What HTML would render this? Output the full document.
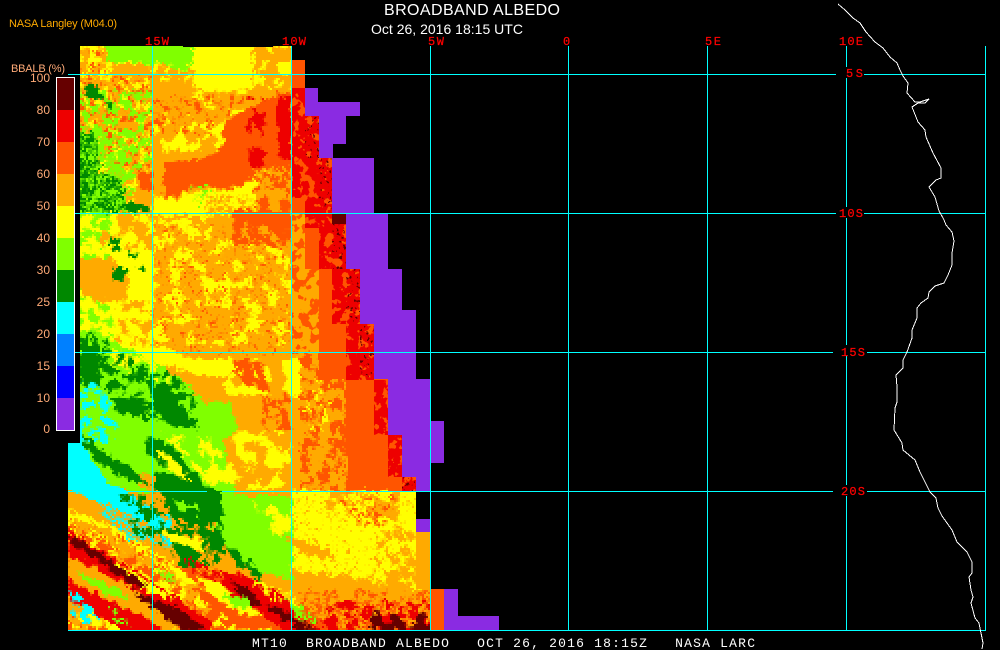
<!DOCTYPE html>
<html><head><meta charset="utf-8"><title>BROADBAND ALBEDO</title>
<style>
html,body{margin:0;padding:0;background:#000;width:1000px;height:650px;overflow:hidden}
svg{display:block}
text{white-space:pre}
.s{font-family:"Liberation Sans",sans-serif}
.m{font-family:"Liberation Mono",monospace}
.r{fill:#f00;stroke:#f00;stroke-width:.25;font-size:12px}
.t{fill:#ffaa77;font-size:12px;text-anchor:end}
</style></head><body>
<svg width="1000" height="650" viewBox="0 0 1000 650" xmlns="http://www.w3.org/2000/svg">
<defs>
<clipPath id="img"><path d="M80 46H292V60H305V116H319V158H332V214H346V269H360V324H374V379H388V435H402V477H416V532H430V589H444V630H68V443H80Z"/></clipPath>
<filter id="rough" x="0" y="0" width="500" height="650" filterUnits="userSpaceOnUse" color-interpolation-filters="sRGB">
<feTurbulence type="fractalNoise" baseFrequency="0.16" numOctaves="4" seed="5" result="n"/>
<feDisplacementMap in="SourceGraphic" in2="n" scale="12" xChannelSelector="R" yChannelSelector="G" result="d"/>
<feFlood flood-color="#000" x="0" y="0" width="1" height="1"/>
<feComposite width="2" height="2" result="dot"/>
<feTile result="grid"/>
<feComposite in="d" in2="grid" operator="in" result="p0"/>
<feOffset in="p0" dx="1" dy="0" result="p1"/>
<feMerge result="p2"><feMergeNode in="p0"/><feMergeNode in="p1"/></feMerge>
<feOffset in="p2" dx="0" dy="1" result="p3"/>
<feMerge><feMergeNode in="p2"/><feMergeNode in="p3"/></feMerge>
</filter>
<filter id="m1" x="0" y="0" width="500" height="650" filterUnits="userSpaceOnUse" color-interpolation-filters="sRGB">
<feTurbulence type="fractalNoise" baseFrequency="0.06" numOctaves="3" seed="11"/>
<feColorMatrix values="0 0 0 0 0 0 0 0 0 0 0 0 0 0 0 30 0 0 0 -15"/>
<feComposite in="SourceGraphic" operator="in"/>
</filter>
<filter id="m2" x="0" y="0" width="500" height="650" filterUnits="userSpaceOnUse" color-interpolation-filters="sRGB">
<feTurbulence type="fractalNoise" baseFrequency="0.11" numOctaves="2" seed="23"/>
<feColorMatrix values="0 0 0 0 0 0 0 0 0 0 0 0 0 0 0 0 30 0 0 -15.5"/>
<feComposite in="SourceGraphic" operator="in"/>
</filter>
<filter id="m3" x="0" y="0" width="500" height="650" filterUnits="userSpaceOnUse" color-interpolation-filters="sRGB">
<feTurbulence type="fractalNoise" baseFrequency="0.3" numOctaves="2" seed="3"/>
<feColorMatrix values="0 0 0 0 0 0 0 0 0 0 0 0 0 0 0 30 0 0 0 -15"/>
<feComposite in="SourceGraphic" operator="in"/>
</filter>
<filter id="m4" x="0" y="0" width="500" height="650" filterUnits="userSpaceOnUse" color-interpolation-filters="sRGB">
<feTurbulence type="fractalNoise" baseFrequency="0.18" numOctaves="2" seed="41"/>
<feColorMatrix values="0 0 0 0 0 0 0 0 0 0 0 0 0 0 0 30 0 0 0 -17.5"/>
<feComposite in="SourceGraphic" operator="in"/>
</filter>
<filter id="m5" x="0" y="0" width="500" height="650" filterUnits="userSpaceOnUse" color-interpolation-filters="sRGB">
<feTurbulence type="fractalNoise" baseFrequency="0.1" numOctaves="3" seed="17"/>
<feColorMatrix values="0 0 0 0 0 0 0 0 0 0 0 0 0 0 0 30 0 0 0 -15.6"/>
<feComposite in="SourceGraphic" operator="in"/>
</filter>
<filter id="m6" x="0" y="0" width="500" height="650" filterUnits="userSpaceOnUse" color-interpolation-filters="sRGB">
<feTurbulence type="fractalNoise" baseFrequency="0.12" numOctaves="3" seed="8"/>
<feColorMatrix values="0 0 0 0 0 0 0 0 0 0 0 0 0 0 0 0 30 0 0 -12"/>
<feComposite in="SourceGraphic" operator="in"/>
</filter>
<filter id="m7" x="0" y="0" width="500" height="650" filterUnits="userSpaceOnUse" color-interpolation-filters="sRGB">
<feTurbulence type="fractalNoise" baseFrequency="0.3" numOctaves="2" seed="29"/>
<feColorMatrix values="0 0 0 0 0 0 0 0 0 0 0 0 0 0 0 30 0 0 0 -19.5"/>
<feComposite in="SourceGraphic" operator="in"/>
</filter>
<filter id="m8" x="0" y="0" width="500" height="650" filterUnits="userSpaceOnUse" color-interpolation-filters="sRGB">
<feTurbulence type="fractalNoise" baseFrequency="0.065" numOctaves="3" seed="31"/>
<feColorMatrix values="0 0 0 0 0 0 0 0 0 0 0 0 0 0 0 30 0 0 0 -16"/>
<feComposite in="SourceGraphic" operator="in"/>
</filter>
</defs>
<rect width="1000" height="650" fill="#000"/>

<g clip-path="url(#img)"><g filter="url(#rough)">
<rect x="50" y="30" width="420" height="620" fill="#ffaa00"/>

<!-- top band -->
<path fill="#ffff00" d="M60 30H112V78H60Z"/>
<path fill="#ff5500" d="M60 45H112V78H60Z" filter="url(#m4)"/>
<path fill="#ffaa00" d="M60 40H112V78H60Z" filter="url(#m5)"/>
<path fill="#80ff00" d="M108 30H194V70L180 72L162 62L147 66L112 62L106 66Z"/>
<path fill="#ffff00" d="M193 30H252V90H193Z"/>
<path fill="#ffff00" d="M105 62H195V80H105Z" filter="url(#m5)"/>
<path fill="#ffaa00" d="M113 64H147V76H113Z"/>
<path fill="#ffff00" d="M253 40H296V92H253Z" filter="url(#m8)"/>

<!-- left column -->
<path fill="#ffaa00" d="M60 76H152V215H60Z"/>
<path fill="#ffff00" d="M60 76H152V215H60Z" filter="url(#m5)"/>
<path fill="#ff5500" d="M60 76H152V170H60Z" filter="url(#m4)"/>
<path fill="#80ff00" d="M60 90H150V170L135 200L60 210Z" filter="url(#m2)"/>
<path fill="#ffaa00" d="M135 170H155V204H135Z"/>
<path fill="#ff5500" d="M138 172H152V190H138Z"/>
<path fill="#008800" d="M84 84L98 86L100 98L86 96Z"/>
<path fill="#008800" d="M70 128L96 134L100 170L122 180L124 200L146 204L146 218H70Z"/>
<path fill="#80ff00" d="M70 130H125V218H70Z" filter="url(#m3)"/>
<path fill="#008800" d="M104 100L112 104L108 110Z"/>

<!-- upper middle -->
<path fill="#ffaa00" d="M152 88H290V215H152Z"/>
<path fill="#ffff00" d="M193 82H250V88L238 90L205 92Z"/>
<path fill="#ffff00" d="M190 90H250V125H190Z" filter="url(#m8)"/>
<path fill="#ff5500" d="M153 95H255V135H153Z" filter="url(#m4)"/>
<path fill="#ffff00" d="M153 112H225V150H153Z" filter="url(#m8)"/>
<path fill="#ff5500" d="M224 122L280 92H292V170L262 168L247 182L225 188L195 186L172 197L162 195L165 160L195 160L222 148Z"/>
<path fill="#ee0000" d="M277 96H291V158H277Z" />
<path fill="#ee0000" d="M248 96H264V170H248Z" filter="url(#m1)"/>
<path fill="#ffff00" d="M153 196L175 198L195 190L225 190L250 182L256 178L258 215H153Z"/>
<path fill="#80ff00" d="M192 185H212V205H192Z" filter="url(#m4)"/>
<path fill="#ffaa00" d="M205 195H260V215H205Z" filter="url(#m3)"/>
<path fill="#ffaa00" d="M255 172H292V215H255Z"/>
<path fill="#ff5500" d="M255 172H292V215H255Z" filter="url(#m5)"/>
<path fill="#ffff00" d="M250 170H275V190H250Z" filter="url(#m7)"/>

<!-- mid-left -->
<path fill="#ffff00" d="M60 212H153V350H60Z"/>
<path fill="#80ff00" d="M60 212H112V330H60Z" filter="url(#m2)"/>
<path fill="#ffaa00" d="M100 212H153V250H100Z" filter="url(#m1)"/>
<path fill="#ffaa00" d="M78 258L112 258L130 278L125 300L95 302L78 288Z"/>
<path fill="#ffaa00" d="M115 300H153V350H115Z" filter="url(#m5)"/>
<path fill="#008800" d="M110 238L118 238L120 252L112 252Z"/>
<path fill="#008800" d="M112 266L124 266L124 280L112 280Z"/>
<path fill="#008800" d="M128 250L138 252L136 258L130 258Z"/>
<path fill="#008800" d="M136 265L145 268L142 272Z"/>

<!-- middle orange with yellow mottling -->
<path fill="#ffaa00" d="M153 215H345V355H153Z"/>
<path fill="#ffff00" d="M153 240H292V345H153Z" filter="url(#m8)"/>
<path fill="#ffff00" d="M153 215H210V240H153Z" filter="url(#m2)"/>
<path fill="#ff5500" d="M153 225H300V355H153Z" filter="url(#m7)"/>
<path fill="#ff5500" d="M233 210H292V245H233Z"/>
<path fill="#ffaa00" d="M233 225H292V245H233Z" filter="url(#m5)"/>

<!-- below 15S -->
<path fill="#ffff00" d="M60 345L160 345L190 358L240 358L240 376L200 376L180 368L60 350Z"/>
<path fill="#ffaa00" d="M200 376H300V490H200Z"/>
<path fill="#ffff00" d="M225 358H300V395H225Z" filter="url(#m1)"/>
<path fill="#ff5500" d="M232 358L262 362L270 390L245 385L232 372Z" filter="url(#m6)"/>
<path fill="#ff5500" d="M262 395H290V430H262Z" filter="url(#m5)"/>
<path fill="#ffff00" d="M282 358H302L306 398L284 392Z"/>
<path fill="#ffaa00" d="M300 352H345V490H300Z"/>
<path fill="#ff5500" d="M300 352H345V490H300Z" filter="url(#m5)"/>
<path fill="#ffff00" d="M305 380H330V430H305Z" filter="url(#m4)"/>
<path fill="#ffff00" d="M230 430H290V490H230Z" filter="url(#m1)"/>
<path fill="#ff5500" d="M345 352H430V495H345Z"/>

<!-- green diagonal -->
<path fill="#80ff00" d="M60 330L96 330L150 360L185 382L205 405L228 400L238 428L222 440L238 500L292 500L292 580L240 565L180 480L120 470L60 470Z"/>
<path fill="#ffff00" d="M105 345L150 360L172 385L150 380L115 368Z" filter="url(#m1)"/>
<path fill="#ffff00" d="M160 432L228 440L244 485L215 490L195 470Z" filter="url(#m1)"/>
<path fill="#008800" d="M60 332H98L125 355L150 368L168 368L196 398L197 430L165 420L135 420L110 395L85 385L60 380Z" filter="url(#m2)"/>
<path fill="#008800" d="M80 345H98L100 385H80Z"/>
<path fill="#008800" d="M150 385L170 390L195 425L175 428L155 412Z"/>
<path fill="#008800" d="M108 395L140 398L150 420L118 412Z"/>
<path fill="#80ff00" d="M193 402L225 402L226 422L198 424Z"/>
<path fill="#00ffff" d="M60 378L100 385L118 425L108 445L100 440L60 440Z" filter="url(#m2)"/>

<!-- cyan block -->
<path fill="#00ffff" d="M55 430H82L90 460L125 492L165 520L155 528L120 510L85 495L70 490H55Z"/>
<path fill="#80ff00" d="M92 455L120 470L150 492L130 492L105 480Z"/>
<path fill="#008800" d="M80 433L100 450L135 470L150 487L125 478L95 460Z"/>
<path fill="#008800" d="M148 435L170 445L208 488L222 490L222 524L190 526L180 515L168 515L168 500L153 490L155 470L175 475L145 450Z"/>
<path fill="#80ff00" d="M172 500L195 505L198 518L180 510Z"/>
<path fill="#ffff00" d="M153 447L175 458L192 482L170 472Z"/>

<!-- lower left mottled -->
<path fill="#ffff00" d="M55 505L120 530L200 580L250 600L320 640H55Z"/>
<path fill="#ff5500" d="M55 510L140 545L200 580H55Z" filter="url(#m3)"/>
<path fill="#00ffff" d="M100 495L170 515L172 545L130 540L100 515Z" filter="url(#m3)"/>
<path fill="#008800" d="M120 495H170L220 525L222 560L190 570L160 545L135 535Z" filter="url(#m2)"/>
<path fill="#008800" d="M172 540L195 545L198 565L180 565Z"/>
<path fill="#008800" d="M208 530L222 535L226 555L212 550Z"/>
<path fill="#ffff00" d="M160 530L205 540L200 550L170 540Z"/>

<!-- lime centre -->
<path fill="#80ff00" d="M222 495H290V575L255 565L228 545Z"/>
<path fill="#008800" d="M226 545L240 552L246 570L232 560Z"/>
<path fill="#008800" d="M245 560L260 570L262 582L250 575Z"/>
<path fill="#ffff00" d="M250 500L290 510L290 545L270 530Z" filter="url(#m1)"/>

<!-- bottom streak band -->
<path fill="#ffaa00" d="M55 510L110 530L150 560L200 570L245 590L300 585L300 640H55Z" filter="url(#m1)"/>
<path fill="#ff5500" d="M55 520L130 555L210 600L280 640H55Z" filter="url(#m2)"/>
<path fill="#ee0000" d="M68 530L100 550L150 580L210 620L215 635L190 635L140 600L90 565L68 555Z"/>
<path fill="#ffaa00" d="M68 555L100 570L160 605L190 630H130L80 590L68 590Z"/>
<path fill="#80ff00" d="M75 570L120 590L128 600L100 592Z"/>
<path fill="#ffff00" d="M115 562L150 582L175 600L150 592L120 575Z"/>
<path fill="#80ff00" d="M150 565L170 572L180 585L162 580Z" filter="url(#m3)"/>
<path fill="#ee0000" d="M68 580L150 620L165 635H130L90 610L68 600Z"/>
<path fill="#00ffff" d="M68 590L90 605L105 625L85 625L68 610Z" filter="url(#m2)"/>
<path fill="#80ff00" d="M105 605L125 605L128 625L112 620Z" filter="url(#m2)"/>
<path fill="#660000" d="M68 535L76 536L100 553L115 568L98 562L74 545Z"/>
<path fill="#660000" d="M100 555L122 568L146 584L136 588L108 570Z"/>
<path fill="#660000" d="M133 593L150 598L190 625L180 628L150 606Z"/>
<path fill="#660000" d="M150 600L172 605L208 630H182Z"/>

<path fill="#ff5500" d="M175 565L240 580L300 605L340 630H240L205 600Z"/>
<path fill="#ffff00" d="M195 575L240 590L262 615L245 615L215 600Z"/>
<path fill="#ee0000" d="M220 570L245 575L275 590L320 620L335 635H290L250 605L225 590Z"/>
<path fill="#660000" d="M227 580L245 586L262 604L252 606Z"/>
<path fill="#660000" d="M263 604L282 608L300 623L285 622Z"/>
<path fill="#660000" d="M292 618L305 620L325 635H296Z"/>
<path fill="#80ff00" d="M223 593L248 597L252 608L232 606Z"/>
<path fill="#ffff00" d="M168 560L190 578L205 590L190 585L172 572Z"/>
<path fill="#80ff00" d="M285 598L312 612L318 624L298 618Z"/>
<path fill="#ffff00" d="M250 580L290 592L300 605L270 600Z" filter="url(#m3)"/>
<path fill="#ee0000" d="M180 555L230 575L240 590L195 575Z" filter="url(#m3)"/>

<!-- lower yellow field -->
<path fill="#ffff00" d="M292 490H420V590L380 585L340 575L292 570Z"/>
<path fill="#ffaa00" d="M310 490H400V530L360 520L330 510Z" filter="url(#m1)"/>
<path fill="#ffaa00" d="M292 490H420V590H292Z" filter="url(#m7)"/>
<path fill="#ffaa00" d="M282 535L300 540L330 550L335 560L305 555Z"/>
<path fill="#ffaa00" d="M375 530H440V592H375Z" filter="url(#m5)"/>
<path fill="#ff5500" d="M340 500L395 495L385 525L355 525Z" filter="url(#m4)"/>
<path fill="#ff5500" d="M300 590H440V640H300Z" filter="url(#m3)"/>
<path fill="#ee0000" d="M320 600H440V640H320Z" filter="url(#m2)"/>
<path fill="#660000" d="M370 612H440V640H370Z" filter="url(#m1)"/>
<path fill="#ffaa00" d="M340 570H430V600H340Z" filter="url(#m1)"/>
</g>

<!-- staircase strips with speckle -->
<g shape-rendering="crispEdges">
<g fill="#ffaa00">
<rect x="292" y="214" width="27" height="140"/>
</g>
<g fill="#ff5500" filter="url(#m5)">
<rect x="292" y="214" width="27" height="140"/>
</g>
<g fill="#ff5500">
<rect x="292" y="60" width="13" height="154"/>
<rect x="305" y="116" width="14" height="98"/>
<rect x="319" y="158" width="13" height="221"/>
<rect x="332" y="214" width="14" height="165"/>
<rect x="346" y="269" width="14" height="110"/>
<rect x="360" y="324" width="14" height="55"/>
<rect x="305" y="214" width="14" height="55"/>
<rect x="346" y="380" width="28" height="55"/>
<rect x="374" y="380" width="14" height="97"/>
<rect x="388" y="435" width="14" height="56"/>
<rect x="402" y="477" width="14" height="14"/>
</g>
<g fill="#ee0000" filter="url(#m6)">
<rect x="292" y="88" width="13" height="110"/>
<rect x="305" y="116" width="14" height="112"/>
<rect x="319" y="158" width="13" height="111"/>
<rect x="332" y="214" width="14" height="110"/>
<rect x="346" y="269" width="14" height="111"/>
<rect x="360" y="324" width="14" height="56"/>
<rect x="374" y="380" width="14" height="55"/>
<rect x="388" y="435" width="14" height="42"/>
<rect x="402" y="477" width="14" height="14"/>
</g>
<g fill="#660000" filter="url(#m7)">
<rect x="305" y="116" width="14" height="42"/>
<rect x="319" y="158" width="13" height="56"/>
<rect x="332" y="214" width="14" height="55"/>
<rect x="346" y="269" width="14" height="55"/>
<rect x="360" y="324" width="14" height="56"/>
<rect x="402" y="477" width="14" height="14"/>
</g>
<rect x="332" y="214" width="14" height="10" fill="#660000"/>
<rect x="430" y="589" width="14" height="41" fill="#ff5500"/>
<rect x="416" y="532" width="14" height="57" fill="#ffaa00"/>
<rect x="183" y="46" width="90" height="1" fill="#000"/>
</g>
</g>

<!-- purple -->
<path fill="#8a2be2" shape-rendering="crispEdges" d="M305 88H318V102H360V116H346V144H333V158H374V214H388V269H402V310H416V379H430V421H444V463H430V491H416V477H402V435H388V379H374V324H360V269H346V214H332V158H319V116H305Z"/>
<rect x="416" y="519" width="14" height="13" fill="#8a2be2" shape-rendering="crispEdges"/>
<path fill="#8a2be2" shape-rendering="crispEdges" d="M444 589H458V616H499V630H444Z"/>

<!-- grid -->
<g fill="#00ffff" shape-rendering="crispEdges">
<rect x="152" y="46" width="1" height="585"/>
<rect x="291" y="46" width="1" height="585"/>
<rect x="430" y="46" width="1" height="585"/>
<rect x="568" y="46" width="1" height="585"/>
<rect x="707" y="46" width="1" height="585"/>
<rect x="846" y="46" width="1" height="585"/>
<rect x="985" y="46" width="1" height="585"/>
<rect x="68" y="74" width="918" height="1"/>
<rect x="68" y="213" width="918" height="1"/>
<rect x="68" y="352" width="918" height="1"/>
<rect x="68" y="491" width="918" height="1"/>
<rect x="68" y="630" width="918" height="1"/>
</g>
<rect x="207" y="491" width="15" height="1" fill="#008800" shape-rendering="crispEdges"/>

<!-- label knockouts -->
<g fill="#000" shape-rendering="crispEdges">
<rect x="836" y="67" width="28" height="11"/>
<rect x="836" y="207" width="28" height="11"/>
<rect x="833" y="345" width="34" height="11"/>
<rect x="833" y="485" width="34" height="11"/>
</g>

<!-- coast -->
<polyline fill="none" stroke="#fff" stroke-width="1" shape-rendering="crispEdges" points="838,4 845,10 853,18 860,23 866,32 875,42 883,48 890,57 897,63 900,70 903,76 908,83 907,93 915,102 920,102 929,99 925,103 918,103 912,107 918,122 925,130 926,137 933,153 941,168 941,178 936,180 929,187 935,197 937,204 939,211 943,218 944,220 946,225 952,232 954,241 952,253 952,265 948,275 944,283 935,286 929,292 928,298 921,303 917,308 917,318 912,330 912,338 907,352 903,360 903,368 896,375 897,387 897,402 895,408 894,430 902,443 903,450 915,460 920,472 930,492 936,498 938,508 942,516 952,530 957,542 967,552 972,562 972,573 969,577 971,590 973,597 971,603 975,618 979,623 981,633 983,643 982,649"/>

<!-- colour bar -->
<g shape-rendering="crispEdges">
<rect x="56" y="77" width="19" height="354" fill="#fff"/>
<rect x="57" y="78" width="17" height="32" fill="#660000"/>
<rect x="57" y="110" width="17" height="32" fill="#ee0000"/>
<rect x="57" y="142" width="17" height="32" fill="#ff5500"/>
<rect x="57" y="174" width="17" height="32" fill="#ffaa00"/>
<rect x="57" y="206" width="17" height="32" fill="#ffff00"/>
<rect x="57" y="238" width="17" height="32" fill="#80ff00"/>
<rect x="57" y="270" width="17" height="32" fill="#008800"/>
<rect x="57" y="302" width="17" height="32" fill="#00ffff"/>
<rect x="57" y="334" width="17" height="32" fill="#0080ff"/>
<rect x="57" y="366" width="17" height="32" fill="#0000ff"/>
<rect x="57" y="398" width="17" height="32" fill="#8a2be2"/>
</g>

<!-- text -->
<text class="s" x="384" y="15" fill="#fff" font-size="16" textLength="176">BROADBAND ALBEDO</text>
<text class="s" x="371" y="34" fill="#fff" font-size="14" textLength="152">Oct 26, 2016 18:15 UTC</text>
<text class="s" x="9" y="27" fill="#ffaa00" font-size="11" textLength="108">NASA Langley (M04.0)</text>
<text class="s" x="11" y="72" fill="#ffaa77" font-size="11" textLength="54">BBALB (%)</text>

<g class="s">
<text class="t" x="50" y="82">100</text>
<text class="t" x="50" y="114">80</text>
<text class="t" x="50" y="146">70</text>
<text class="t" x="50" y="178">60</text>
<text class="t" x="50" y="210">50</text>
<text class="t" x="50" y="242">40</text>
<text class="t" x="50" y="274">30</text>
<text class="t" x="50" y="306">25</text>
<text class="t" x="50" y="338">20</text>
<text class="t" x="50" y="370">15</text>
<text class="t" x="50" y="402">10</text>
<text class="t" x="50" y="433">0</text>
</g>

<g class="m">
<text class="r" x="145" y="45" textLength="24">15W</text>
<text class="r" x="282" y="45" textLength="24">10W</text>
<text class="r" x="428" y="45" textLength="16">5W</text>
<text class="r" x="563" y="45" textLength="8">0</text>
<text class="r" x="705" y="45" textLength="16">5E</text>
<text class="r" x="839" y="45" textLength="24">10E</text>
<text class="r" x="846" y="77" textLength="17">5S</text>
<text class="r" x="839" y="217" textLength="24">10S</text>
<text class="r" x="841" y="356" textLength="24">15S</text>
<text class="r" x="841" y="495" textLength="24">20S</text>
</g>

<text class="m" x="252" y="647" fill="#fff" font-size="13" textLength="503">MT10  BROADBAND ALBEDO   OCT 26, 2016 18:15Z   NASA LARC</text>
</svg>
</body></html>
